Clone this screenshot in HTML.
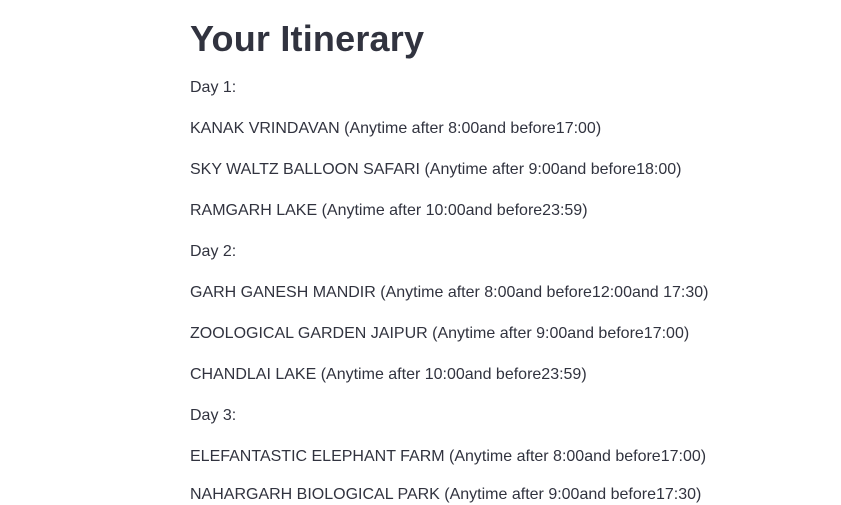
<!DOCTYPE html>
<html><head><meta charset="utf-8"><style>
html,body{margin:0;padding:0;background:#fff;width:841px;height:499px;overflow:hidden}
body{font-family:"Liberation Sans",sans-serif;color:#31333F}
h1{position:absolute;left:190px;top:17px;margin:0;font-size:36px;font-weight:700;line-height:44px;letter-spacing:0.2px}
.l{position:absolute;left:190px;font-size:16px;line-height:20px;white-space:nowrap}
</style></head><body>
<h1>Your Itinerary</h1>
<div class="l" style="top:78px">Day 1:</div>
<div class="l" style="top:119px">KANAK VRINDAVAN (Anytime after 8:00and before17:00)</div>
<div class="l" style="top:160px">SKY WALTZ BALLOON SAFARI (Anytime after 9:00and before18:00)</div>
<div class="l" style="top:201px">RAMGARH LAKE (Anytime after 10:00and before23:59)</div>
<div class="l" style="top:242px">Day 2:</div>
<div class="l" style="top:283px">GARH GANESH MANDIR (Anytime after 8:00and before12:00and 17:30)</div>
<div class="l" style="top:324px">ZOOLOGICAL GARDEN JAIPUR (Anytime after 9:00and before17:00)</div>
<div class="l" style="top:365px">CHANDLAI LAKE (Anytime after 10:00and before23:59)</div>
<div class="l" style="top:406px">Day 3:</div>
<div class="l" style="top:447px">ELEFANTASTIC ELEPHANT FARM (Anytime after 8:00and before17:00)</div>
<div class="l" style="top:485px">NAHARGARH BIOLOGICAL PARK (Anytime after 9:00and before17:30)</div>
</body></html>
